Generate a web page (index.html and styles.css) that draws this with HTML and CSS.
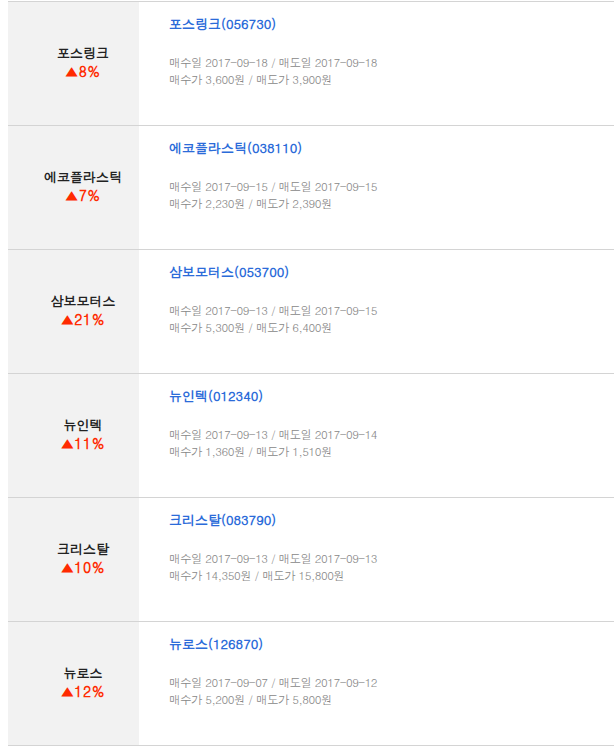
FILE: index.html
```html
<!DOCTYPE html>
<html lang="ko">
  <head>
    <meta charset="UTF-8" />
    <meta name="viewport" content="width=device-width, initial-scale=1.0" />
    <title>추천종목 수익률</title>
    <link rel="stylesheet" href="styles.css">
  </head>
  <body>
    <ul class="result-list">
      <li class="result">
        <div class="result-name">
          <strong>포스링크</strong>
          <span class="rate">▲8%</span>
        </div>
        <div class="result-info">
          <a class="stock" href="#">포스링크(056730)</a>
          <p class="trade">매수일 2017-09-18 / 매도일 2017-09-18<br />매수가 3,600원 / 매도가 3,900원</p>
        </div>
      </li>
      <li class="result">
        <div class="result-name">
          <strong>에코플라스틱</strong>
          <span class="rate">▲7%</span>
        </div>
        <div class="result-info">
          <a class="stock" href="#">에코플라스틱(038110)</a>
          <p class="trade">매수일 2017-09-15 / 매도일 2017-09-15<br />매수가 2,230원 / 매도가 2,390원</p>
        </div>
      </li>
      <li class="result">
        <div class="result-name">
          <strong>삼보모터스</strong>
          <span class="rate">▲21%</span>
        </div>
        <div class="result-info">
          <a class="stock" href="#">삼보모터스(053700)</a>
          <p class="trade">매수일 2017-09-13 / 매도일 2017-09-15<br />매수가 5,300원 / 매도가 6,400원</p>
        </div>
      </li>
      <li class="result">
        <div class="result-name">
          <strong>뉴인텍</strong>
          <span class="rate">▲11%</span>
        </div>
        <div class="result-info">
          <a class="stock" href="#">뉴인텍(012340)</a>
          <p class="trade">매수일 2017-09-13 / 매도일 2017-09-14<br />매수가 1,360원 / 매도가 1,510원</p>
        </div>
      </li>
      <li class="result">
        <div class="result-name">
          <strong>크리스탈</strong>
          <span class="rate">▲10%</span>
        </div>
        <div class="result-info">
          <a class="stock" href="#">크리스탈(083790)</a>
          <p class="trade">매수일 2017-09-13 / 매도일 2017-09-13<br />매수가 14,350원 / 매도가 15,800원</p>
        </div>
      </li>
      <li class="result">
        <div class="result-name">
          <strong>뉴로스</strong>
          <span class="rate">▲12%</span>
        </div>
        <div class="result-info">
          <a class="stock" href="#">뉴로스(126870)</a>
          <p class="trade">매수일 2017-09-07 / 매도일 2017-09-12<br />매수가 5,200원 / 매도가 5,800원</p>
        </div>
      </li>
    </ul>
  </body>
</html>
```

FILE: styles.css
```css
body {
  margin: 0;
  font-family: Dotum, "Noto Sans CJK KR", sans-serif;
  background-color: white;
}

.result-list {
  list-style: none;
  margin: 1px 0 0 8px;
  padding: 0;
  border-top: 1px solid #d4d4d4;
}

.result {
  display: flex;
  height: 123px;
  border-bottom: 1px solid #d4d4d4;
}

.result-name {
  width: 131px;
  padding: 0 0 4px 19px;
  box-sizing: border-box;
  background-color: #f2f2f2;
  display: flex;
  flex-direction: column;
  justify-content: center;
  align-items: center;
  line-height: 18px;
}

.result-name strong {
  font-size: 13px;
  color: #222;
}

.rate {
  font-size: 14px;
  font-weight: bold;
  letter-spacing: 0.5px;
  color: #ff2a00;
}

.result-info {
  padding: 13px 0 0 30px;
}

.stock {
  display: block;
  font-size: 13px;
  font-weight: bold;
  line-height: 18px;
  color: #2b6bd9;
  text-decoration: none;
}

.trade {
  margin: 21px 0 0;
  font-size: 11.5px;
  letter-spacing: -0.5px;
  line-height: 17px;
  color: #888;
}
```
